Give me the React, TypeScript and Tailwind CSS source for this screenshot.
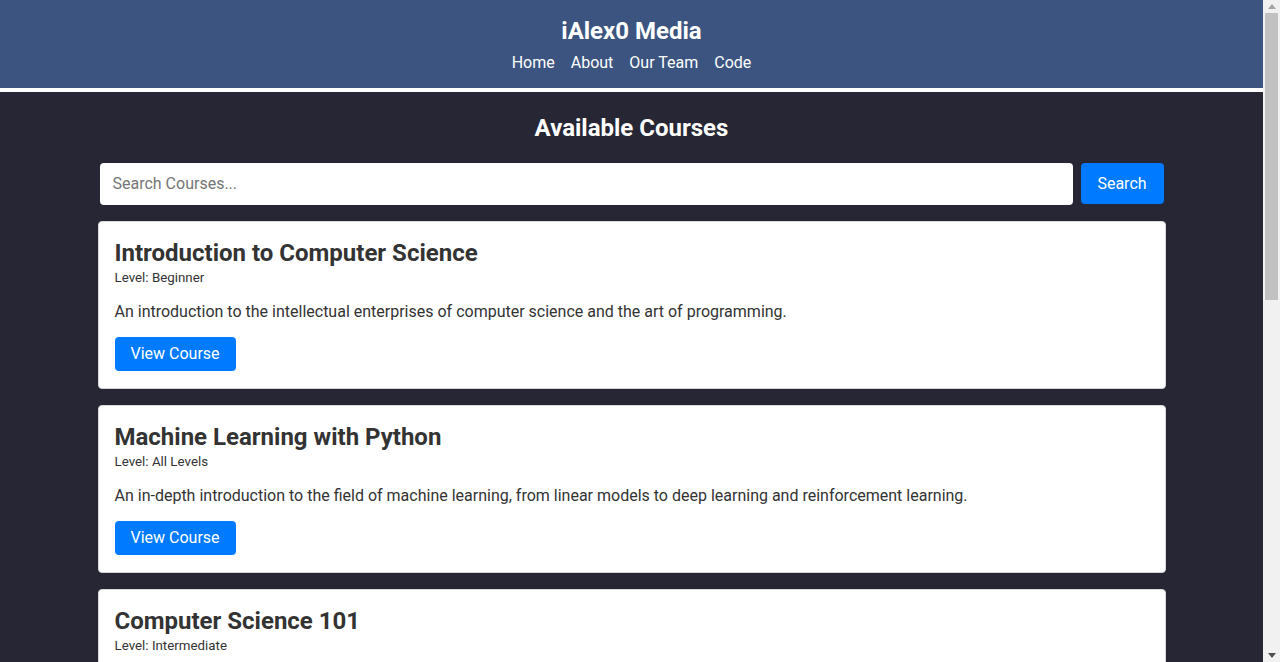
import React from "react";

const courses = [
  {
    title: "Introduction to Computer Science",
    level: "Beginner",
    desc: "An introduction to the intellectual enterprises of computer science and the art of programming.",
  },
  {
    title: "Machine Learning with Python",
    level: "All Levels",
    desc: "An in-depth introduction to the field of machine learning, from linear models to deep learning and reinforcement learning.",
  },
  {
    title: "Computer Science 101",
    level: "Intermediate",
    desc: "Computer Science 101 is a course that covers the fundamentals of computer science.",
  },
];

export default function App() {
  return (
    <div
      className="flex h-[662px] w-[1280px] overflow-hidden bg-[#262634]"
      style={{ fontFamily: "Roboto, 'Liberation Sans', sans-serif" }}
    >
      <div className="flex-1 overflow-hidden">
        <header className="h-[88px] bg-[#3c5580] flex flex-col items-center text-white">
          <h1 className="mt-[16px] text-[24px] leading-[30px] font-bold">iAlex0 Media</h1>
          <nav className="mt-[5px] flex gap-[16px] text-[16px] leading-[24px]">
            <a>Home</a>
            <a>About</a>
            <a>Our Team</a>
            <a>Code</a>
          </nav>
        </header>
        <div className="h-[4px] bg-white" />
        <main className="w-[1068px] mx-auto">
          <h2 className="mt-[21px] text-center text-white text-[24px] leading-[30px] font-bold">
            Available Courses
          </h2>
          <div className="mt-[20px] mx-[2px] flex gap-[8px]">
            <div className="flex-1 h-[42px] bg-white rounded-[4px] flex items-center px-[13px] text-[16px] text-[#757575]">
              Search Courses...
            </div>
            <button className="w-[83px] h-[41px] bg-[#007bff] rounded-[4px] text-white text-[16px]">
              Search
            </button>
          </div>
          <div className="mt-[16px] flex flex-col gap-[16px]">
            {courses.map((c) => (
              <div
                key={c.title}
                className="bg-white border border-[#d6d6d6] rounded-[4px] px-[16px] pt-[16px] pb-[17px] text-[#333]"
              >
                <h3 className="text-[24px] leading-[31px] font-bold text-[#333]">{c.title}</h3>
                <p className="text-[13.33px] leading-[18px] text-[#333]">Level: {c.level}</p>
                <p className="mt-[13px] text-[16px] leading-[24px] text-[#333]">{c.desc}</p>
                <button className="mt-[13px] h-[34px] px-[16px] bg-[#007bff] rounded-[4px] text-white text-[16px]">
                  View Course
                </button>
              </div>
            ))}
          </div>
        </main>
      </div>
      <div className="w-[17px] h-full bg-[#f1f1f1] flex flex-col items-center">
        <div className="h-[13px] flex items-center justify-center text-[#a3a3a3]">
          <svg width="8" height="5" viewBox="0 0 8 5"><path d="M0 5 L4 0 L8 5 Z" fill="currentColor" /></svg>
        </div>
        <div className="w-[13px] h-[287px] bg-[#c1c1c1]" />
        <div className="flex-1" />
        <div className="h-[14px] flex items-center justify-center text-[#505050]">
          <svg width="8" height="5" viewBox="0 0 8 5"><path d="M0 0 L4 5 L8 0 Z" fill="currentColor" /></svg>
        </div>
      </div>
    </div>
  );
}
